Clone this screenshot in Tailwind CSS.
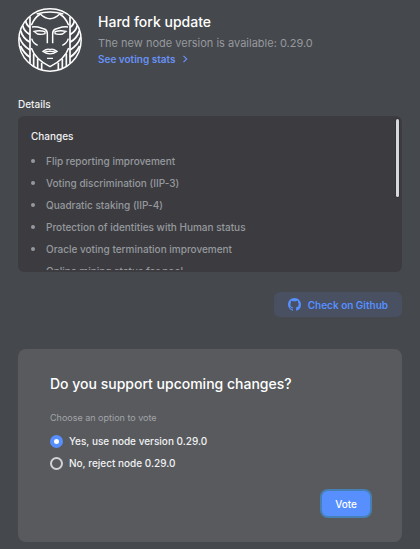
<!DOCTYPE html>
<html lang="en">
<head>
<meta charset="utf-8">
<meta name="viewport" content="width=device-width, initial-scale=1">
<title>Hard fork update</title>
<script src="https://cdn.jsdelivr.net/npm/@tailwindcss/browser@4"></script>
</head>
<body class="min-h-screen bg-[#45484c] font-['Inter',sans-serif] text-[10px] leading-4 font-medium text-[#f0f1f2]">
<main class="px-[18px] pt-2 pb-[7px]">
  <header class="flex gap-4">
    <svg class="size-16 shrink-0" viewBox="24 24 192 192" fill="none" stroke="#fff" stroke-width="4.5" role="img" aria-label="Idena">
      <circle cx="120" cy="120" r="93.5"/>
      <path d="M60 50V190M180 50V190" stroke-width="5"/>
      <path d="M80 42Q120 30 160 42M91 42Q120 70 149 42"/>
      <path d="M64 76Q72 54 91 42M176 76Q168 54 149 42"/>
      <path d="M66 81C82 78 92 84 103 87Q112 90 112 101V130M174 81C158 78 148 84 137 87Q128 90 128 101V130"/>
      <path d="M72 94Q90 90 105 95V101Q96 105 82 102ZM168 94Q150 90 135 95V101Q144 105 158 102Z" stroke-width="4"/>
      <path d="M65 116Q69 130 83 136M175 116Q171 130 157 136"/>
      <path d="M64 144C72 168 88 184 120 200C152 184 168 168 176 144"/>
      <path d="M99 154Q113 144 120 149Q127 144 141 154Q120 169 99 154ZM106 154H134M111 175H129" stroke-width="4"/>
      <path d="M71 162V198M83 177V204M95 188V210M169 162V198M157 177V204M145 188V210" stroke-width="5"/>
      <path d="M47 62Q49 76 60 82M38 76Q42 94 60 104M32 92Q38 114 60 127M28 112Q36 136 60 150M31 138Q42 160 60 172M193 62Q191 76 180 82M202 76Q198 94 180 104M208 92Q202 114 180 127M212 112Q204 136 180 150M209 138Q198 160 180 172" stroke-width="5.5"/>
    </svg>
    <div class="pt-1">
      <h1 class="text-[14px] leading-5 font-medium text-white">Hard fork update</h1>
      <p class="mt-[3px] text-[11px] font-normal text-[#96999e]">The new node version is available: 0.29.0</p>
      <a href="#stats" class="flex items-center gap-[6px] font-semibold text-[#6891f5]">See voting stats
        <svg class="size-2" viewBox="0 0 8 8" fill="none" stroke="currentColor" stroke-width="1.2" aria-hidden="true"><path d="M2.5 .8L5.7 4L2.5 7.2"/></svg>
      </a>
    </div>
  </header>

  <section class="mt-6">
    <h2>Details</h2>
    <div class="relative mt-1 rounded-md bg-[#3c3c40] py-[2px]">
      <div class="h-[152px] overflow-hidden px-[13px] pt-[10px]">
        <h3>Changes</h3>
        <ul class="mt-[6px] leading-[22px] text-[#96999e]">
          <li class="flex items-center gap-[11px]"><span class="size-1 rounded-full bg-[#96999e]"></span>Flip reporting improvement</li>
          <li class="flex items-center gap-[11px]"><span class="size-1 rounded-full bg-[#96999e]"></span>Voting discrimination (IIP-3)</li>
          <li class="flex items-center gap-[11px]"><span class="size-1 rounded-full bg-[#96999e]"></span>Quadratic staking (IIP-4)</li>
          <li class="flex items-center gap-[11px]"><span class="size-1 rounded-full bg-[#96999e]"></span>Protection of identities with Human status</li>
          <li class="flex items-center gap-[11px]"><span class="size-1 rounded-full bg-[#96999e]"></span>Oracle voting termination improvement</li>
          <li class="flex items-center gap-[11px]"><span class="size-1 rounded-full bg-transparent"></span>Online mining status for pool</li>
        </ul>
      </div>
      <div class="absolute top-[3px] right-[3px] h-[78px] w-[3px] rounded-full bg-[#d8d9da] ring-1 ring-[#333438]"></div>
    </div>
    <div class="mt-5 flex justify-end">
      <a href="#github" class="flex h-[25px] items-center gap-[7px] rounded-md bg-[#485062] px-[14px] font-semibold text-[#578fff]">
        <svg class="size-[13px]" viewBox="0 0 16 16" fill="currentColor" aria-hidden="true"><path d="M8 0C3.58 0 0 3.58 0 8c0 3.54 2.29 6.53 5.47 7.59.4.07.55-.17.55-.38 0-.19-.01-.82-.01-1.49-2.01.37-2.53-.49-2.69-.94-.09-.23-.48-.94-.82-1.13-.28-.15-.68-.52-.01-.53.63-.01 1.08.58 1.23.82.72 1.21 1.87.87 2.33.66.07-.52.28-.87.51-1.07-1.78-.2-3.64-.89-3.64-3.95 0-.87.31-1.59.82-2.15-.08-.2-.36-1.02.08-2.12 0 0 .67-.21 2.2.82.64-.18 1.32-.27 2-.27s1.36.09 2 .27c1.53-1.04 2.2-.82 2.2-.82.44 1.1.16 1.92.08 2.12.51.56.82 1.27.82 2.15 0 3.07-1.87 3.75-3.65 3.95.29.25.54.73.54 1.48 0 1.07-.01 1.93-.01 2.2 0 .21.15.46.55.38A8.01 8.01 0 0 0 16 8c0-4.42-3.58-8-8-8z"/></svg>
        Check on Github</a>
    </div>
  </section>

  <form class="mt-8 rounded-lg bg-[#585a5e] px-8 pt-[25px] pb-[26px]">
    <h2 class="text-[14px] leading-5 font-medium text-white">Do you support upcoming changes?</h2>
    <fieldset class="mt-4">
      <legend class="text-[9px] leading-4 font-normal text-[#a3a5a9]">Choose an option to vote</legend>
      <label class="mt-[7px] flex h-4 items-center gap-[6px]"><input type="radio" name="vote" checked class="size-[13px] appearance-none rounded-full border-2 border-[#d0d2d5] checked:border-4 checked:border-[#578fff] checked:bg-white">Yes, use node version 0.29.0</label>
      <label class="mt-[6px] flex h-4 items-center gap-[6px]"><input type="radio" name="vote" class="size-[13px] appearance-none rounded-full border-2 border-[#d0d2d5] checked:border-4 checked:border-[#578fff] checked:bg-white">No, reject node 0.29.0</label>
    </fieldset>
    <div class="mt-5 flex justify-end">
      <button type="button" class="h-[25px] rounded-md bg-[#578fff] px-[13px] font-medium text-white ring-2 ring-[#4680b4]">Vote</button>
    </div>
  </form>
</main>
</body>
</html>
